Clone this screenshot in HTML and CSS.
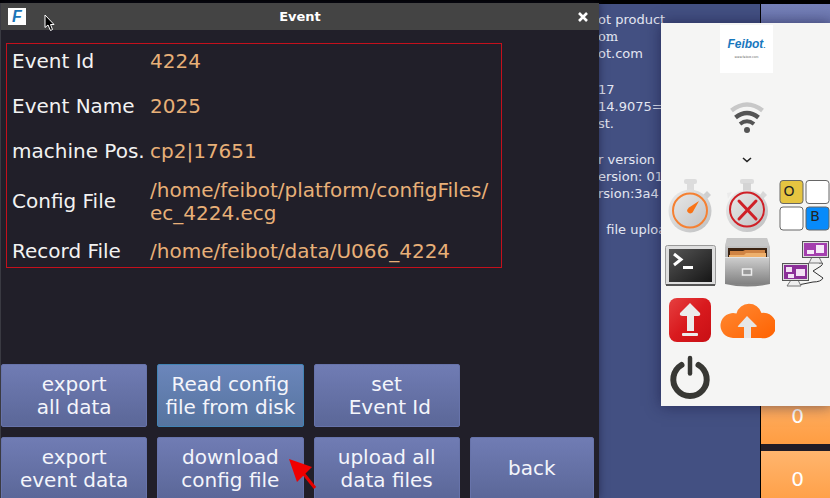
FILE: index.html
```html
<!DOCTYPE html>
<html lang="en">
<head>
    <meta charset="UTF-8">
    <meta name="viewport" content="width=device-width, initial-scale=1.0">
    <title>Event</title>
    <link rel="stylesheet" href="styles.css">
</head>
<body>
    <!-- Main screen behind the windows -->
    <main class="screen">
        <div class="log">
            <p>ot product<br><span class="serif">om</span><br>ot.com</p>
            <p>17<br>14.9075=<br>st.</p>
            <p>r version<br>ersion: 01<br>rsion:3a4</p>
            <p>&nbsp; file uploa</p>
        </div>
        <div class="side">
            <button type="button" class="side-top" aria-label="Menu"></button>
            <button type="button" class="counter">0</button>
            <button type="button" class="counter">0</button>
        </div>
    </main>

    <!-- Event window -->
    <section class="window">
        <header class="titlebar">
            <span class="app-icon">F</span>
            <h1>Event</h1>
            <button type="button" class="close" aria-label="Close">
                <svg width="10" height="10" viewBox="0 0 10 10"><path d="M1 1L9 9M9 1L1 9" stroke="#fff" stroke-width="2.6"/></svg>
            </button>
        </header>

        <dl class="details">
            <dt>Event Id</dt>
            <dd>4224</dd>
            <dt>Event Name</dt>
            <dd>2025</dd>
            <dt>machine Pos.</dt>
            <dd>cp2|17651</dd>
            <dt>Config File</dt>
            <dd>/home/feibot/platform/configFiles/<wbr>ec_4224.ecg</dd>
            <dt>Record File</dt>
            <dd>/home/feibot/data/U066_4224</dd>
        </dl>

        <div class="actions">
            <button type="button">export<br>all data</button>
            <button type="button" class="active">Read config<br>file from disk</button>
            <button type="button">set<br>&nbsp;Event Id</button>
            <span></span>
            <button type="button">export<br>event data</button>
            <button type="button">download<br>config file</button>
            <button type="button">upload all<br>data files</button>
            <button type="button">back</button>
        </div>
    </section>

    <!-- Launcher panel -->
    <aside class="launcher">
        <div class="brand">
            <strong>Feibot<small>.</small></strong>
            <span>www.feibot.com</span>
        </div>
        <svg class="wifi" width="34" height="32" viewBox="0 0 34 32" fill="none">
            <path d="M1.500 8.500Q17-3.500 32.500 8.500" stroke="#c8c8c8" stroke-width="4.500"/>
            <path d="M5.500 15.500Q17 6.500 28.500 15.500" stroke="#555" stroke-width="4.500"/>
            <path d="M10 22Q17 16.500 24 22" stroke="#555" stroke-width="4"/>
            <circle cx="17" cy="28" r="3" fill="#555"/>
        </svg>
        <button type="button" class="expand" aria-label="Expand">
            <svg width="10" height="6" viewBox="0 0 10 6" fill="none"><path d="M1 1L5 4.500L9 1" stroke="#222" stroke-width="1.600"/></svg>
        </button>

        <div class="apps">
            <button type="button" aria-label="Start timing">
                <svg viewBox="0 0 57 57">
                    <defs>
                        <linearGradient id="silver" x1="0" y1="0" x2="1" y2="1">
                            <stop offset="0" stop-color="#ececec"/>
                            <stop offset="1" stop-color="#bdbebf"/>
                        </linearGradient>
                    </defs>
                    <rect x="23" y="1" width="13" height="5" rx="2" fill="#dcdcdc"/>
                    <path d="M26 5h7v8h-7z" fill="#dcdcdc"/>
                    <path d="M42 17L46 13L50 17L46 21z" fill="#cfcfcf"/>
                    <circle cx="29" cy="33" r="21.500" fill="url(#silver)"/>
                    <circle cx="29" cy="32.500" r="17" fill="none" stroke="#f58032" stroke-width="2"/>
                    <path d="M38 23L31.500 34.500Q28 37 26 33Q26 31 28 29.500z" fill="#f97316"/>
                </svg>
            </button>
            <button type="button" aria-label="Stop timing">
                <svg viewBox="0 0 57 57">
                    <rect x="22" y="1" width="14" height="5" rx="2" fill="#dcdcdc"/>
                    <path d="M25 5h8v8h-8z" fill="#d4d4d4"/>
                    <path d="M42 17L45 13L49 17L45 21z" fill="#d8d8d8"/>
                    <path d="M14 14L9 15L10 21z" fill="#ebebeb"/>
                    <circle cx="29" cy="33" r="21" fill="url(#silver)"/>
                    <circle cx="29" cy="31.500" r="17" fill="none" stroke="#cf2027" stroke-width="2"/>
                    <path d="M21 23L38 41M38 23L21 41" stroke="#cf2027" stroke-width="3" stroke-linecap="round"/>
                </svg>
            </button>
            <button type="button" aria-label="Blocks">
                <svg viewBox="0 0 57 57" stroke="#666" stroke-width="1">
                    <rect x="5" y="2.500" width="23" height="23" rx="3" fill="#e5c441"/>
                    <rect x="31" y="2.500" width="23" height="23" rx="3" fill="#fff"/>
                    <rect x="5" y="29" width="23" height="23" rx="3" fill="#fff"/>
                    <rect x="31" y="29" width="23" height="23" rx="3" fill="#078bfa"/>
                    <text x="14" y="18" class="tile-letter">O</text>
                    <text x="40" y="43" class="tile-letter">B</text>
                </svg>
            </button>

            <button type="button" aria-label="Terminal">
                <svg viewBox="0 0 57 57">
                    <defs>
                        <linearGradient id="crt" x1="0" y1="0" x2="1" y2="1">
                            <stop offset="0" stop-color="#555"/>
                            <stop offset="1" stop-color="#161616"/>
                        </linearGradient>
                        <linearGradient id="metal" x1="0" y1="0" x2="0" y2="1">
                            <stop offset="0" stop-color="#cfcfcf"/>
                            <stop offset="1" stop-color="#828282"/>
                        </linearGradient>
                    </defs>
                    <rect x="4.500" y="10.500" width="50" height="40" rx="2" fill="#dedede" stroke="#9a9a9a"/>
                    <path d="M5 50h49" stroke="#555" stroke-width="2"/>
                    <rect x="8" y="14" width="43" height="33" fill="url(#crt)"/>
                    <path d="M13 19L20 24.500L13 30" fill="none" stroke="#fff" stroke-width="3"/>
                    <path d="M22 32.500h10" stroke="#fff" stroke-width="3"/>
                </svg>
            </button>
            <button type="button" aria-label="Files">
                <svg viewBox="0 0 57 57">
                    <path d="M9 3H49L52 12V49Q29 54 7 49V12z" fill="url(#metal)"/>
                    <path d="M9 3H49L51 11H7z" fill="#c8c8c8"/>
                    <rect x="10" y="13" width="39" height="10" fill="#3b2312"/>
                    <path d="M12 16h13l2-1h20v8H12z" fill="#d08444"/>
                    <path d="M11 20h15l2-2h20v5H11z" fill="#eeb06c"/>
                    <rect x="7" y="22" width="44" height="27" rx="1" fill="url(#metal)"/>
                    <path d="M7 22.500h44" stroke="#e2e2e2"/>
                    <rect x="24.500" y="34" width="9" height="6" fill="#999" stroke="#eee" stroke-width="1.500"/>
                </svg>
            </button>
            <button type="button" aria-label="Network">
                <svg viewBox="0 0 57 57">
                    <path d="M44 28Q50 27 46 31L38 36L48 43Q46 47 38 47L23 50" fill="none" stroke="#333" stroke-width="1"/>
                    <path d="M37 22h7l3 6H34zM16 45h7l3 6H12z" fill="#eee" stroke="#777"/>
                    <rect x="27.500" y="6.500" width="26" height="16" fill="#ddd" stroke="#555"/>
                    <rect x="29" y="8" width="23" height="13" fill="#a43fae"/>
                    <path d="M32 15h7v4h-7zM41 10h8v8h-8z" fill="#f6e8f8"/>
                    <rect x="7.500" y="28.500" width="26" height="17" fill="#ddd" stroke="#555"/>
                    <rect x="9" y="30" width="23" height="14" fill="#8b2f98"/>
                    <path d="M11 32h6v5h-6zM21 34h9v7h-9zM13 39h6v4h-6z" fill="#f3e0f5"/>
                </svg>
            </button>

            <button type="button" aria-label="Upload">
                <svg viewBox="0 0 57 57">
                    <defs>
                        <linearGradient id="red" x1="0" y1="0" x2="1" y2="1">
                            <stop offset="0" stop-color="#e64040"/>
                            <stop offset="0.5" stop-color="#d91a1e"/>
                            <stop offset="1" stop-color="#c80f14"/>
                        </linearGradient>
                    </defs>
                    <rect x="8" y="6" width="42" height="44" rx="8" fill="url(#red)"/>
                    <path d="M29 11L39 21Q40 24 37 24H33V39H26V24H22Q18 24 19 21z" fill="#ececec"/>
                    <rect x="21" y="41" width="16" height="3" rx="1" fill="#ececec"/>
                </svg>
            </button>
            <button type="button" aria-label="Cloud upload">
                <svg viewBox="0 0 57 57">
                    <defs>
                        <linearGradient id="orange" x1="0" y1="0" x2="1" y2="1">
                            <stop offset="0" stop-color="#ff8a35"/>
                            <stop offset="1" stop-color="#ff6200"/>
                        </linearGradient>
                    </defs>
                    <path d="M15 46A12.500 12.500 0 1 1 18.500 21.500A13 13 0 0 1 43.500 21A12.700 12.700 0 1 1 43 46z" fill="url(#orange)"/>
                    <path d="M29 24L39 34Q39 35 37 35H33V46H26V35H21Q19 35 20 34z" fill="#e6e6e6"/>
                </svg>
            </button>
            <span></span>

            <button type="button" aria-label="Power">
                <svg viewBox="0 0 57 57" fill="none" stroke="#383834" stroke-linecap="round">
                    <path d="M20.500 16A16.700 16.700 0 1 0 37.500 16" stroke-width="6"/>
                    <path d="M29 9V24.500" stroke-width="4.500"/>
                </svg>
            </button>
        </div>
    </aside>

    <svg class="pointer" width="11" height="18" viewBox="0 0 11 18"><path d="M1 1V13.500L4 11L6.500 16.500L8.500 15.500L6.500 10.500H10z" fill="#000" stroke="#fff"/></svg>
    <svg class="red-arrow" width="32" height="34" viewBox="0 0 32 34"><path d="M15 15L27 30" stroke="#e60000" stroke-width="3"/><path d="M1 1L24 9L9 24z" fill="#f00000"/></svg>
</body>
</html>
```
FILE: styles.css
```css
* {
    box-sizing: border-box;
}

body {
    margin: 0;
    height: 100vh;
    overflow: hidden;
    position: relative;
    background: #000;
    font-family: "DejaVu Sans", sans-serif;
}

h1, p, dl, dd {
    margin: 0;
}

button {
    font-family: inherit;
    border: none;
    padding: 0;
    cursor: pointer;
}

/* Main screen */
.screen {
    display: grid;
    grid-template-columns: 1fr 69px;
    gap: 1px;
    height: 100vh;
    padding-top: 4px;
}

.log {
    display: flex;
    flex-direction: column;
    gap: 19px;
    padding: 7px 0 0 calc(100% - 162px);
    background: #435082;
    color: #e4e7f2;
    font-size: 13px;
    line-height: 17px;
    white-space: nowrap;
}

.serif {
    font-family: "DejaVu Serif", serif;
}

.side {
    display: flex;
    flex-direction: column;
    gap: 7px;
    margin-bottom: -9px;
    background: #211c26;
}

.side-top {
    flex: 1;
    background: linear-gradient(#7580b8, #5c679c 60px);
}

.counter {
    height: 56px;
    padding-left: 4px;
    background: linear-gradient(#ffb56e, #ff9d42);
    color: #fff;
    font-size: 20px;
}

/* Event window */
.window {
    position: absolute;
    inset: 3px 231px 0 0;
    display: flex;
    flex-direction: column;
    background: #211f29;
    border-left: 1px solid #3a3a42;
    box-shadow: 0 0 8px rgba(20, 20, 50, 0.6);
}

.titlebar {
    display: grid;
    grid-template-columns: 18px 1fr 18px;
    align-items: center;
    height: 27px;
    padding: 0 7px;
    background: #444;
    color: #fff;
    text-align: center;
}

.titlebar h1 {
    font-size: 13px;
    line-height: 18px;
}

.app-icon {
    height: 17px;
    background: #fff;
    color: #1b75b8;
    font: italic bold 16px/17px "Liberation Sans", sans-serif;
}

.close {
    display: flex;
    justify-content: center;
    background: none;
}

.details {
    position: relative;
    display: grid;
    grid-template-columns: 138px 1fr;
    grid-template-rows: 45px 45px 45px 55px 45px;
    align-items: center;
    margin: 9px 97px 0 5px;
    padding: 0 6px;
    color: #f2f2f2;
    font-size: 20px;
    line-height: 23px;
    white-space: nowrap;
}

.details dd {
    color: #e8b078;
    white-space: normal;
}

/* Red frame drawn over the details */
.details::after {
    content: "";
    position: absolute;
    inset: 4px 0 6px;
    border: 1px solid #c4101c;
}

.actions {
    display: grid;
    grid-template-columns: 146fr 146fr 146fr 124fr;
    grid-auto-rows: 63px;
    gap: 10px;
    margin: auto 5px -2px 0;
}

.actions button {
    background: linear-gradient(#707cb4, #5b6798);
    border: 1px solid #6773aa;
    border-radius: 2px;
    color: #f4f5fb;
    font-size: 20px;
    line-height: 23px;
    white-space: nowrap;
}

.actions .active {
    background: linear-gradient(#6b86bb, #56749f);
    border-color: #4283b4;
}

/* Launcher */
.launcher {
    position: absolute;
    top: 23px;
    right: -2px;
    width: 171px;
    display: flex;
    flex-direction: column;
    align-items: center;
    padding-top: 2px;
    overflow: hidden;
    background: #f5f5f4;
    box-shadow: 0 0 14px rgba(20, 20, 60, 0.6);
}

.brand {
    display: flex;
    flex-direction: column;
    align-items: center;
    width: 53px;
    height: 48px;
    padding-top: 12px;
    background: #fff;
    color: #555;
    font-size: 3px;
    line-height: 5px;
}

.brand strong {
    margin-bottom: 2px;
    color: #1878be;
    font: italic bold 12px/14px "Liberation Sans", sans-serif;
}

.brand small {
    font-size: 8px;
}

.wifi {
    margin-top: 29px;
}

.expand {
    display: flex;
    height: 6px;
    margin: 23px 0 15px;
    background: none;
}

.apps {
    display: grid;
    grid-template-columns: repeat(3, 57px);
    grid-auto-rows: 57px;
}

.apps button {
    background: none;
}

.apps svg {
    display: block;
}

.tile-letter {
    fill: #222;
    stroke: none;
    font-size: 14px;
    text-anchor: middle;
}

/* Pointers over the window */
.pointer {
    position: absolute;
    top: 14px;
    left: 44px;
}

.red-arrow {
    position: absolute;
    bottom: 6px;
    left: 288px;
}
```
